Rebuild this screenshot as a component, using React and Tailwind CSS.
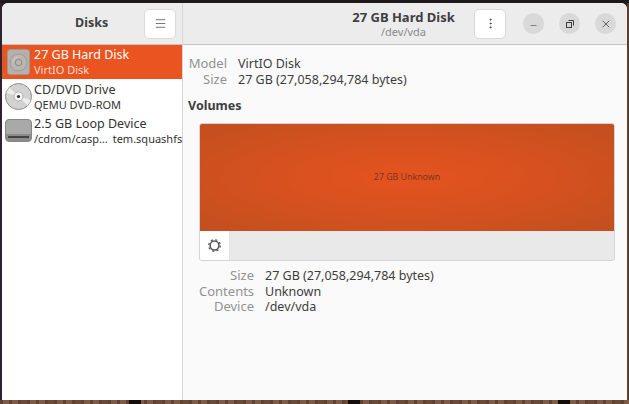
import React from "react";
import { Menu, EllipsisVertical, Minus, X } from "lucide-react";

const woodBase = ["#5f4234", "#7d5a46", "#4c3429", "#8a664f", "#6b4a38", "#574033", "#75543f", "#7f5c4a", "#46322a"];
const darkKnots = [[43, 46], [116, 119], [186, 189]];
const woodColors = Array.from({ length: 210 }, (_, i) =>
  darkKnots.some(([a, b]) => i >= a && i <= b) ? "#140d0a" : woodBase[(i * i * 7 + i * 3) % woodBase.length]
);

const DiskIcon = () => (
  <div className="w-[23px] h-[26px] rounded-[3px] bg-[#b5b0aa] border border-[#9a9a9a] flex items-center justify-center">
    <svg width="19" height="19" viewBox="0 0 19 19" fill="none">
      <circle cx="9.5" cy="9.5" r="8.5" stroke="#9a9a9a" strokeWidth="1" fill="#bab6b0" />
      <circle cx="9.5" cy="9.5" r="3.2" stroke="#929292" strokeWidth="1.2" />
      <path d="M4 9.5a5.5 5.5 0 0 1 5.5-5.5" stroke="#cfcbc6" strokeWidth="1.2" />
    </svg>
  </div>
);

const CdIcon = () => (
  <svg width="27" height="27" viewBox="0 0 27 27">
    <circle cx="13.5" cy="13.5" r="13" fill="#d2d2d2" stroke="#8c8c8c" />
    <path d="M13.5 13.5 L4.5 4.5 A12.5 12.5 0 0 0 1.5 10 Z" fill="#ececec" />
    <path d="M13.5 13.5 L22.5 22.5 A12.5 12.5 0 0 0 25.5 17 Z" fill="#ececec" />
    <circle cx="13.5" cy="13.5" r="4.5" fill="#f4f4f4" stroke="#b0b0b0" />
    <circle cx="13.5" cy="13.5" r="1.6" fill="#333333" />
  </svg>
);

const LoopIcon = () => (
  <div className="w-[27px] h-[23px] rounded-[4px] bg-[#a9a9a9] border border-[#858585] flex flex-col justify-end overflow-hidden">
    <div className="h-[7px] bg-[#8b8b8b] flex items-center justify-center px-[2px]">
      <div className="h-[2px] w-full bg-[#444444]" />
    </div>
  </div>
);

const GearIcon = () => (
  <svg width="15" height="15" viewBox="0 0 15 15" fill="none" stroke="#555555">
    <circle cx="7.5" cy="7.5" r="4.4" strokeWidth="1.5" />
    <circle cx="7.5" cy="7.5" r="5.8" strokeWidth="1.2" strokeDasharray="2.2 2.35" />
  </svg>
);

const Row = ({ icon, title, sub, selected }) => (
  <div className={`h-[34px] flex items-center ${selected ? "bg-[#e95420] text-white pb-[2px]" : "text-[#333333]"}`}>
    <div className={`w-[32px] flex justify-center shrink-0 ${selected ? "mt-[2px]" : ""}`}>{icon}</div>
    <div className="flex flex-col leading-none">
      <span className="text-[12.5px] leading-[16px] whitespace-nowrap">{title}</span>
      <span className={`text-[11px] leading-[13px] whitespace-nowrap ${selected ? "text-[#fbdccf]" : ""}`}>
        {sub}
      </span>
    </div>
  </div>
);

const InfoRow = ({ label, value, width }) => (
  <div className="flex h-[15.5px] items-center gap-[11px] whitespace-nowrap leading-[15px]">
    <span className={`${width} text-right text-[13px] text-[#929292]`}>{label}</span>
    <span className="text-[#3d3d3d]">{value}</span>
  </div>
);

const WinBtn = ({ children }) => (
  <div className="w-[21px] h-[21px] rounded-full bg-[#d9d9d9] flex items-center justify-center text-[#3d3d3d]">
    {children}
  </div>
);

const App = () => {
  return (
    <div className="w-[629px] h-[404px] flex flex-col overflow-hidden bg-[#241a1c] font-['Noto_Sans',sans-serif] text-[12.5px]">
      <div className="h-[3px] shrink-0 bg-[#1d1a1c]" />
      <div className="flex-1 min-h-0 flex">
        <div className="w-[2px] shrink-0 bg-[#2c2230]" />
        <div className="flex-1 min-w-0 flex rounded-t-[6px] overflow-hidden">
          {/* sidebar */}
          <div className="w-[181px] shrink-0 flex flex-col bg-white border-r border-[#d6d6d6]">
            <div className="h-[42px] shrink-0 bg-[#ececec] border-b border-[#c4c4c4] flex items-center pl-[73px] pr-[6px] justify-between">
              <span className="text-[12.5px] font-bold text-[#404040]">Disks</span>
              <div className="w-[32px] h-[30px] rounded-[5px] bg-white border border-[#d9d9d9] flex items-center justify-center text-[#3d3d3d]">
                <Menu size={13} strokeWidth={1.3} />
              </div>
            </div>
            <Row selected icon={<DiskIcon />} title="27 GB Hard Disk" sub="VirtIO Disk" />
            <Row icon={<CdIcon />} title="CD/DVD Drive" sub="QEMU DVD-ROM" />
            <Row
              icon={<LoopIcon />}
              title="2.5 GB Loop Device"
              sub={<span className="flex gap-[5px]"><span>/cdrom/casp…</span><span>tem.squashfs</span></span>}
            />
          </div>
          {/* main */}
          <div className="flex-1 min-w-0 flex flex-col bg-[#fafafa]">
            <div className="h-[42px] shrink-0 bg-[#ececec] border-b border-[#c4c4c4] flex items-center pr-[11px]">
              <div className="flex-1 flex flex-col items-center ml-[164px]">
                <span className="text-[13px] leading-[16px] font-bold text-[#404040] whitespace-nowrap">27 GB Hard Disk</span>
                <span className="text-[11px] leading-[13px] text-[#8a8a8a]">/dev/vda</span>
              </div>
              <div className="ml-[14px] w-[32px] h-[30px] rounded-[5px] bg-white border border-[#d9d9d9] flex items-center justify-center text-[#3d3d3d]">
                <EllipsisVertical size={13} strokeWidth={1.6} />
              </div>
              <div className="ml-[17px] flex gap-[15px]">
                <WinBtn><Minus size={9} strokeWidth={1.5} className="mt-[3px]" /></WinBtn>
                <WinBtn>
                  <svg width="8" height="8" viewBox="0 0 8 8" fill="none" stroke="#3d3d3d" strokeWidth="1">
                    <rect x="0.5" y="2.5" width="5" height="5" />
                    <path d="M2.5 0.5h5v5" />
                  </svg>
                </WinBtn>
                <WinBtn><X size={12} strokeWidth={1.5} /></WinBtn>
              </div>
            </div>
            <div className="flex-1 min-h-0 flex flex-col pl-[5px] pr-[12px] pt-[11px]">
              <InfoRow label="Model" value="VirtIO Disk" width="w-[39px]" />
              <InfoRow label="Size" value="27 GB (27,058,294,784 bytes)" width="w-[39px]" />
              <h2 className="mt-[11px] h-[16px] flex items-center text-[12.5px] font-bold text-[#3d3d3d]">Volumes</h2>
              <div className="mt-[9px] ml-[11px] rounded-[3px] border border-[#d4d4d4] bg-[#e9e9e9] overflow-hidden">
                <div className="h-[107px] flex items-center justify-center bg-[radial-gradient(ellipse_at_center,#e5531f_0%,#d5511f_50%,#c24f1f_100%)] text-[8.8px] text-[#7a3520]">
                  27 GB Unknown
                </div>
                <div className="h-[29px] flex">
                  <div className="w-[30px] bg-white border-r border-[#e2e2e2] flex items-center justify-center">
                    <GearIcon />
                  </div>
                </div>
              </div>
              <div className="mt-[7px] pl-[11px]">
                <InfoRow label="Size" value="27 GB (27,058,294,784 bytes)" width="w-[55px]" />
                <InfoRow label="Contents" value="Unknown" width="w-[55px]" />
                <InfoRow label="Device" value="/dev/vda" width="w-[55px]" />
              </div>
            </div>
          </div>
        </div>
        <div className="w-[2px] shrink-0 bg-[#5a3e30]" />
      </div>
      <div className="h-[4px] shrink-0 flex">
        {woodColors.map((c, i) => (
          <div key={i} className="flex-1" style={{ backgroundColor: c }} />
        ))}
      </div>
    </div>
  );
};

export default App;
